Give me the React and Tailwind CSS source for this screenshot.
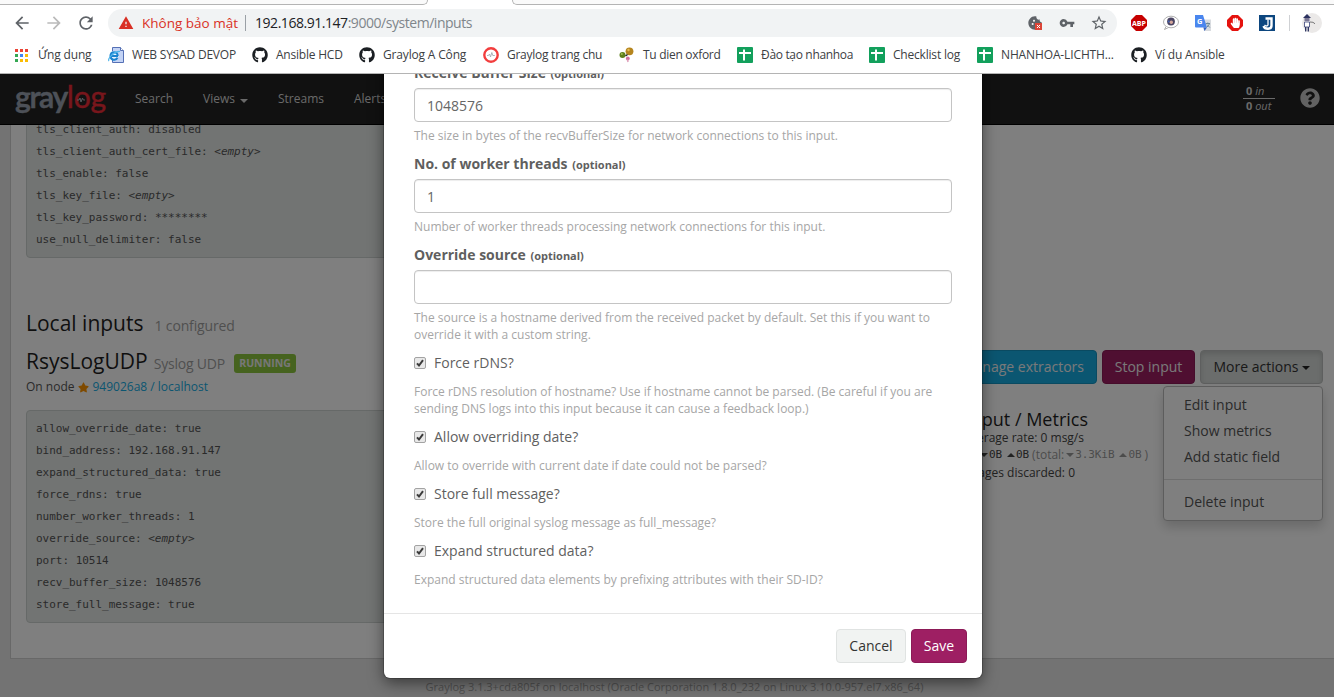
import React from "react";
import { MdArrowBack, MdArrowForward, MdRefresh, MdWarning, MdVpnKey, MdStarBorder, MdCookie } from "react-icons/md";
import { FaGithub, FaStar, FaQuestionCircle, FaHandPaper } from "react-icons/fa";

const appColors = [
  "bg-[#ea4335]", "bg-[#ea4335]", "bg-[#ea4335]",
  "bg-[#34a853]", "bg-[#4285f4]", "bg-[#fbbc05]",
  "bg-[#34a853]", "bg-[#fbbc05]", "bg-[#fbbc05]",
];

function SheetIcon() {
  return (
    <svg className="h-4 w-4" viewBox="0 0 16 16">
      <rect width="16" height="16" rx="1" fill="#12a05c" />
      <path d="M7 2.5v11M2 6h12" stroke="#fff" strokeWidth="2" />
    </svg>
  );
}

function AppsIcon() {
  return (
    <div className="grid h-[13px] w-[13px] grid-cols-3 gap-[2px]">
      {appColors.map((c, i) => <span key={i} className={c} />)}
    </div>
  );
}

function IeIcon() {
  return (
    <svg className="h-4 w-4" viewBox="0 0 16 16">
      <path d="M4.500.5h8l3 3v12h-11z" fill="#c3d3f5" stroke="#5570b5" />
      <path d="M12.500.5v3h3" fill="#fff" stroke="#5570b5" />
      <circle cx="6" cy="8.500" r="4.600" fill="#e8f4fd" />
      <path d="M10 9H2.500M9.700 9c0-5-7.200-5-7.200 0 0 4.500 5.700 4.800 7 1.700" fill="none" stroke="#1b83cf" strokeWidth="2" />
      <path d="M1 14c-2-2 5-10 11-9.500" fill="none" stroke="#4cb4ea" strokeWidth="1.200" />
    </svg>
  );
}

function GraylogIcon() {
  return (
    <svg className="h-4 w-4" viewBox="0 0 16 16">
      <circle cx="8" cy="8" r="6.700" fill="#fff" stroke="#f23d3d" strokeWidth="2.400" />
      <path d="M4 8.500h1.500l1-1.500 1 3 1.300-4.500 1 3h2" fill="none" stroke="#a5adb6" strokeWidth=".9" />
    </svg>
  );
}

function OxfordIcon() {
  return (
    <svg className="h-4 w-4" viewBox="0 0 16 16">
      <circle cx="10.500" cy="4.300" r="3.900" fill="#b5851e" />
      <circle cx="3.500" cy="8" r="3" fill="#5f7f1c" />
      <path d="M6.500 9l2-1.500" stroke="#222" strokeWidth="1.500" />
      <circle cx="8.800" cy="11.500" r="1.900" fill="#d06f9b" />
      <path d="M8.500 12.500l.5 2.500" stroke="#e0a0bb" strokeWidth="1.500" />
      <circle cx="9.500" cy="3" r="1.200" fill="#e7bd55" />
      <circle cx="2.800" cy="7" r="1" fill="#a5bf4f" />
    </svg>
  );
}

const bookmarks = [
  { icon: <AppsIcon />, label: "Ứng dụng", box: "w-[93px] gap-[10px]", t: "tracking-[-0.18px]" },
  { icon: <IeIcon />, label: "WEB SYSAD DEVOP", box: "w-[144px] gap-2", t: "tracking-[-0.2px]" },
  { icon: <FaGithub className="h-4 w-4" />, label: "Ansible HCD", box: "w-[107px] gap-2", t: "tracking-[-0.22px]" },
  { icon: <FaGithub className="h-4 w-4" />, label: "Graylog A Công", box: "w-[124px] gap-2", t: "tracking-[-0.17px]" },
  { icon: <GraylogIcon />, label: "Graylog trang chu", box: "w-[136px] gap-2", t: "tracking-[-0.26px]" },
  { icon: <OxfordIcon />, label: "Tu dien oxford", box: "w-[118px] gap-2", t: "tracking-[-0.3px]" },
  { icon: <SheetIcon />, label: "Đào tạo nhanhoa", box: "w-[132px] gap-2", t: "tracking-[-0.33px]" },
  { icon: <SheetIcon />, label: "Checklist log", box: "w-[108px] gap-2", t: "tracking-[-0.2px]" },
  { icon: <SheetIcon />, label: "NHANHOA-LICHTH...", box: "w-[154px] gap-2", t: "tracking-[-0.13px]" },
  { icon: <FaGithub className="h-4 w-4" />, label: "Ví dụ Ansible", box: "gap-2", t: "tracking-[-0.18px]" },
];

function BrowserChrome() {
  return (
    <header className="h-[74px] shrink-0 border-b border-[#b4b4b4] bg-white text-[#5f6368]">
      <div className="flex h-[5px] justify-between">
        <div className="w-[428px] rounded-br-[6px] border-r border-b border-[#b4b4b4] bg-[#fafafa]" />
        <div className="w-[822px] rounded-bl-[6px] border-b border-l border-[#b4b4b4] bg-[#fafafa]" />
      </div>
      <div className="flex h-9 items-center">
        <MdArrowBack className="ml-[12px] h-5 w-5" />
        <MdArrowForward className="ml-[12px] h-5 w-5 text-[#bababa]" />
        <MdRefresh className="ml-[12px] h-5 w-5" />
        <div className="ml-3 flex h-7 w-[1009px] items-center rounded-full bg-[#f1f3f4] pl-[10px] text-[14px] leading-5">
          <MdWarning className="h-4 w-4 text-[#d93025]" />
          <span className="ml-2 w-[96px] text-[13.500px] whitespace-nowrap text-[#d93025]">Không bảo mật</span>
          <span className="ml-[7px] h-4 w-px bg-[#9aa0a6]" />
          <span className="ml-[9px] tracking-[-0.46px] text-[#80868b]"><span className="text-[#202124]">192.168.91.147</span>:9000/system/inputs</span>
          <div className="mr-[10px] ml-auto flex items-center gap-4">
            <span className="relative">
              <MdCookie className="h-4 w-4" />
              <svg className="absolute top-[8px] left-[8px] h-[7px] w-[7px]" viewBox="0 0 7 7"><rect width="7" height="7" fill="#db4437" /><path d="M2 2l3 3M5 2l-3 3" stroke="#fff" /></svg>
            </span>
            <MdVpnKey className="h-4 w-4" />
            <MdStarBorder className="h-[18px] w-[18px] -mx-px" />
          </div>
        </div>
        <div className="ml-[14px] flex items-center gap-4">
          <svg className="h-4 w-4" viewBox="0 0 16 16">
            <path d="M5 0h6l5 5v6l-5 5H5l-5-5V5z" fill="#c60000" />
            <text x="8" y="10.800" textAnchor="middle" fontSize="7.500" fontWeight="bold" fill="#fff" textLength="14" lengthAdjust="spacingAndGlyphs">ABP</text>
          </svg>
          <svg className="h-4 w-4" viewBox="0 0 16 16">
            <ellipse cx="8" cy="7" rx="7.500" ry="5.800" fill="#fff" stroke="#9a9a9a" strokeWidth=".8" />
            <path d="M3 11.500l-1.500 3 4-2" fill="#fff" stroke="#9a9a9a" strokeWidth=".8" />
            <circle cx="8" cy="6.500" r="3.900" fill="#4b4563" />
            <circle cx="8.300" cy="7.300" r="1.700" fill="#d3a59a" />
            <circle cx="5.800" cy="6.500" r="1.100" fill="#4262b0" />
          </svg>
          <svg className="h-4 w-4" viewBox="0 0 16 16">
            <path d="M6 4.500h10V16H9z" fill="#d9dce0" />
            <path d="M0 0h8l4 12.500H1a1 1 0 0 1-1-1z" fill="#4a86ee" />
            <path d="M8.500 12.500H12L9.500 16z" fill="#3261c2" />
            <text x="4.800" y="9" textAnchor="middle" fontSize="7.500" fontWeight="bold" fill="#fff">G</text>
            <path d="M10.800 8.500H15M12.800 7.500v1M14.500 8.500q-.5 2-2.500 3.500M12 9.500l2.800 3" stroke="#6c8a9b" fill="none" />
          </svg>
          <svg className="h-4 w-4" viewBox="0 0 16 16">
            <path d="M5 0h6l5 5v6l-5 5H5l-5-5V5z" fill="#e5120e" />
            <FaHandPaper x="3" y="2.500" size={10.5} color="#fff" />
          </svg>
          <svg className="h-4 w-4" viewBox="0 0 16 16">
            <rect width="16" height="16" fill="#0c467f" />
            <path d="M6.500 3.500h6v7q0 3.300-3.500 3.300-3.500 0-4.500-2.800" fill="none" stroke="#fff" strokeWidth="2.400" />
            <path d="M9 4.500v5.500q-1 2-3.500 0" fill="none" stroke="#fff" strokeWidth="1.300" />
          </svg>
          <span className="ml-[-2px] h-4 w-px bg-[#cfd1d4]" />
          <svg className="ml-[-4px] h-5 w-5" viewBox="0 0 20 20">
            <circle cx="10" cy="10" r="10" fill="#ebe9e8" />
            <path d="M1 5L5 1l4 4z" fill="#2c3260" />
            <path d="M2.500 5h5v3h-5z" fill="#7a7795" />
            <path d="M2.500 9h5v5h-5z" fill="#fff" stroke="#3a4278" strokeWidth=".8" />
            <path d="M3.700 14v4.500M6.300 14v4.500" stroke="#29315f" strokeWidth="1.300" />
            <path d="M8 9l3 .3 2 1.500" stroke="#777" fill="none" />
          </svg>
        </div>
      </div>
      <div className="flex h-[26px] items-center pt-[2px] pl-[15px] text-[12px] text-[#3c4043]">
        {bookmarks.map((b) => (
          <div key={b.label} className={`flex shrink-0 items-center whitespace-nowrap ${b.box}`}>
            <span className="shrink-0 text-[#1b1f23]">{b.icon}</span>
            <span className={b.t}>{b.label}</span>
          </div>
        ))}
      </div>
    </header>
  );
}

function Caret({ className }) {
  return <span className={`inline-block border-x-4 border-t-4 border-x-transparent ${className}`} />;
}

function Navbar() {
  return (
    <nav className="flex h-[51px] shrink-0 items-center border-b border-black bg-[#222] text-[12px] text-[#d4d4d4]">
      <div className="relative ml-[15px] flex h-[50px] w-[90px] items-center font-[Lato] text-[30px] leading-none whitespace-nowrap">
        <span className="-mt-[7px] w-[52px] font-bold tracking-[-1.4px] text-[#9aa3b0] [-webkit-text-stroke:0.3px_#9aa3b0]">gray</span>
        <span className="-mt-[7px] tracking-[-0.2px] text-[#f02c38] [-webkit-text-stroke:0.4px_#f02c38]">log</span>
        <svg className="absolute top-[22px] left-[62px] h-2 w-2" viewBox="0 0 8 8"><path d="M0 4h2l1-2 1 4 1.500-4 .8 2H8" fill="none" stroke="#b0b7c0" /></svg>
      </div>
      <span className="ml-[30px] w-[68px]">Search</span>
      <span className="flex w-[75px] items-center gap-[5px]">Views <Caret className="mt-[3px] border-t-[#d4d4d4]" /></span>
      <span className="w-[76px]">Streams</span>
      <span>Alerts</span>
      <div className="mr-[25px] mb-[2px] ml-auto w-8 text-[11px] text-[#d4d4d4]">
        <div className="border-b border-[#d4d4d4] pl-[3px] leading-[14px]"><b>0</b> <i>in</i></div>
        <div className="pl-[3px] leading-[14px]"><b>0</b> <i>out</i></div>
      </div>
      <FaQuestionCircle className="mr-[14px] mb-[2px] h-5 w-5 text-[#c4c4c4]" />
    </nav>
  );
}

function Config({ rows, className }) {
  return (
    <div className={`w-[840px] rounded-[4px] border border-[#cdd3d0] bg-[#e4e8e6] px-[9px] pt-[7px] pb-[6px] font-['DejaVu_Sans_Mono',monospace] text-[11px] leading-[22px] tracking-[-0.02px] whitespace-pre text-[#555] ${className}`}>
      {rows.map(([k, v]) => (
        <div key={k}>{k}: {v === "<empty>" ? <i>{v}</i> : v}</div>
      ))}
    </div>
  );
}

const globalRows = [
  ["tls_client_auth", "disabled"],
  ["tls_client_auth_cert_file", "<empty>"],
  ["tls_enable", "false"],
  ["tls_key_file", "<empty>"],
  ["tls_key_password", "********"],
  ["use_null_delimiter", "false"],
];

const localRows = [
  ["allow_override_date", "true"],
  ["bind_address", "192.168.91.147"],
  ["expand_structured_data", "true"],
  ["force_rdns", "true"],
  ["number_worker_threads", "1"],
  ["override_source", "<empty>"],
  ["port", "10514"],
  ["recv_buffer_size", "1048576"],
  ["store_full_message", "true"],
];

function Traffic({ up, className = "", children }) {
  return (
    <span className={`flex h-[17px] items-center font-['DejaVu_Sans_Mono',monospace] text-[11px] leading-[17px] tracking-[-0.1px] ${className}`}>
      <span className={up ? "mr-px border-x-4 border-b-4 border-x-transparent border-b-current" : "mr-px border-x-4 border-t-4 border-x-transparent border-t-current"} />
      {children}
    </span>
  );
}

function InputsPage() {
  return (
    <div className="min-h-0 flex-1 overflow-hidden">
      <div className="-mt-[13px] ml-[10px] h-[547px] w-[1330px] border border-[#d0d0d0] bg-white px-[15px] pt-0">
        <Config rows={globalRows} className="-mt-[2px] h-[147px]" />
        <h2 className="mt-[50px] flex h-[30px] items-baseline text-[21px] leading-[30px] whitespace-nowrap text-[#1f1f1f]">
          Local inputs <span className="ml-[11px] text-[14px] tracking-[-0.15px] text-[#9f9f9f]">1 configured</span>
        </h2>
        <div className="mt-[8px] flex justify-between">
          <div>
            <h3 className="flex h-[30px] items-baseline text-[21px] leading-[30px] whitespace-nowrap text-[#1f1f1f]">
              RsysLogUDP <span className="ml-[6px] text-[14px] tracking-[-0.2px] text-[#9f9f9f]">Syslog UDP</span>
              <span className="mt-[4px] ml-[9px] flex h-[19px] w-[62px] items-center justify-center self-center rounded-[3px] bg-[#8dc63f] text-[10.500px] font-bold text-[#eee]">RUNNING</span>
            </h3>
            <div className="flex h-[18px] items-center pt-[4px] text-[12px] leading-[18px] whitespace-nowrap text-[#555]">
              On node <FaStar className="mr-[3px] ml-[4px] h-[11px] w-[11px] text-[#ff9500]" />
              <span className="text-[#16ace3]">949026a8 / localhost</span>
            </div>
            <Config rows={localRows} className="mt-[16px]" />
          </div>
          <div className="mt-[4px] w-[440px] pr-[1px]">
            <div className="relative flex justify-end gap-[5px] text-[14px] leading-[32px] whitespace-nowrap text-[#f3f3f3]">
              <button className="h-[34px] rounded-[4px] border border-[#1494c3] bg-[#16ace3] px-3">Manage extractors</button>
              <button className="h-[34px] w-[93px] rounded-[4px] border border-[#8c1a57] bg-[#9e1f63]">Stop input</button>
              <button className="flex h-[34px] w-[123px] items-center justify-center gap-1 rounded-[4px] border border-[#bcbfbe] bg-[#d6dad8] pl-px text-[#333] shadow-[inset_0_3px_5px_rgba(0,0,0,0.125)]">More actions <Caret className="mt-[2px] border-t-[#222]" /></button>
              <div className="absolute top-9 right-0 w-40 rounded-[4px] border border-[#bbb] bg-white py-[5px] text-[14px] leading-[26px] text-[#555] shadow-[0_6px_12px_rgba(0,0,0,0.175)]">
                <div className="pl-5">Edit input</div>
                <div className="pl-5">Show metrics</div>
                <div className="pl-5">Add static field</div>
                <div className="my-[9px] h-px bg-[#dcdcdc]" />
                <div className="pl-5">Delete input</div>
              </div>
            </div>
            <div className="mt-[26px] flex flex-col items-end text-[12px] leading-[17px] whitespace-nowrap text-[#444]">
              <h4 className="mr-[235px] text-[18px] leading-[19px] text-[#1f1f1f]">Throughput / Metrics</h4>
              <div className="mr-[239px]">1 minute average rate: 0 msg/s</div>
              <div className="mr-[175px] flex h-[18px] items-start">
                <span>Network IO:</span>
                <Traffic className="ml-[3px]">0B</Traffic>
                <Traffic up className="ml-[5px]">0B</Traffic>
                <span className="ml-[3px] flex text-[#999]">(total:<Traffic className="ml-[2px]">3.3KiB</Traffic><Traffic up className="ml-[5px]">0B</Traffic><span className="ml-[3px]">)</span></span>
              </div>
              <div className="mr-[248px]">Empty messages discarded: 0</div>
            </div>
          </div>
        </div>
      </div>
      <footer className="mt-[20px] pr-0 pl-[15px] text-center text-[11px] leading-[16px] text-[#a0a0a0]">
        Graylog 3.1.3+cda805f on localhost (Oracle Corporation 1.8.0_232 on Linux 3.10.0-957.el7.x86_64)
      </footer>
    </div>
  );
}

function Field({ label, value, help }) {
  return (
    <div className="mb-[10px]">
      <label className="block h-5 text-[14px] leading-5 font-bold">{label} <span className="ml-[1px] text-[11px]">(optional)</span></label>
      <div className="mt-[5px] h-[34px] rounded-[4px] border border-[#c4c4c4] px-3 text-[14px] leading-[34px] text-[#666] shadow-[inset_0_1px_1px_rgba(0,0,0,0.075)]">{value}</div>
      <p className="mt-[5px] text-[12px] leading-[17px] text-[#a6a6a6]">{help}</p>
    </div>
  );
}

function Check({ label, help }) {
  return (
    <div className="mb-[10px]">
      <div className="flex h-5 items-center text-[14px] leading-5">
        <svg className="mr-2 h-3 w-3" viewBox="0 0 12 12">
          <rect x=".5" y=".5" width="11" height="11" rx="1.500" fill="#e8e8e8" stroke="#a3a3a3" />
          <path d="M3 6.300l2 2.200L9 3.200" fill="none" stroke="#3b3b3b" strokeWidth="2" />
        </svg>
        {label}
      </div>
      <p className="mt-[10px] text-[12px] leading-[17px] text-[#a6a6a6]">{help}</p>
    </div>
  );
}

function InputModal() {
  return (
    <div className="absolute inset-0 flex items-start justify-center overflow-hidden bg-black/50 pl-8">
      <div className="-mt-[26px] h-[630px] w-[598px] shrink-0 rounded-[6px] bg-white text-[#5f5f5f] shadow-[0_0_0_1px_rgba(0,0,0,0.2),0_5px_15px_rgba(0,0,0,0.5)]">
        <div className="h-[566px] border-b border-[#e5e5e5] px-[30px] pt-[15px]">
          <Field label="Receive Buffer Size" value="1048576" help="The size in bytes of the recvBufferSize for network connections to this input." />
          <Field label="No. of worker threads" value="1" help="Number of worker threads processing network connections for this input." />
          <Field label="Override source" value="" help={<>The source is a hostname derived from the received packet by default. Set this if you want to<br />override it with a custom string.</>} />
          <Check label="Force rDNS?" help={<>Force rDNS resolution of hostname? Use if hostname cannot be parsed. (Be careful if you are<br />sending DNS logs into this input because it can cause a feedback loop.)</>} />
          <Check label="Allow overriding date?" help="Allow to override with current date if date could not be parsed?" />
          <Check label="Store full message?" help="Store the full original syslog message as full_message?" />
          <Check label="Expand structured data?" help="Expand structured data elements by prefixing attributes with their SD-ID?" />
        </div>
        <div className="flex justify-end gap-[5px] px-[15px] pt-[15px] text-[14px] leading-[32px]">
          <button className="h-[34px] w-[70px] rounded-[4px] border border-[#e0e3e2] bg-[#f1f3f2] text-[#333]">Cancel</button>
          <button className="h-[34px] w-[56px] rounded-[4px] border border-[#8c1a57] bg-[#9e1f63] text-white">Save</button>
        </div>
      </div>
    </div>
  );
}

export default function App() {
  return (
    <div className="flex h-[697px] w-[1334px] flex-col overflow-hidden font-['Open_Sans',sans-serif]">
      <BrowserChrome />
      <main className="relative flex min-h-0 flex-1 flex-col bg-[#e6e6e6]">
        <Navbar />
        <InputsPage />
        <InputModal />
      </main>
    </div>
  );
}
